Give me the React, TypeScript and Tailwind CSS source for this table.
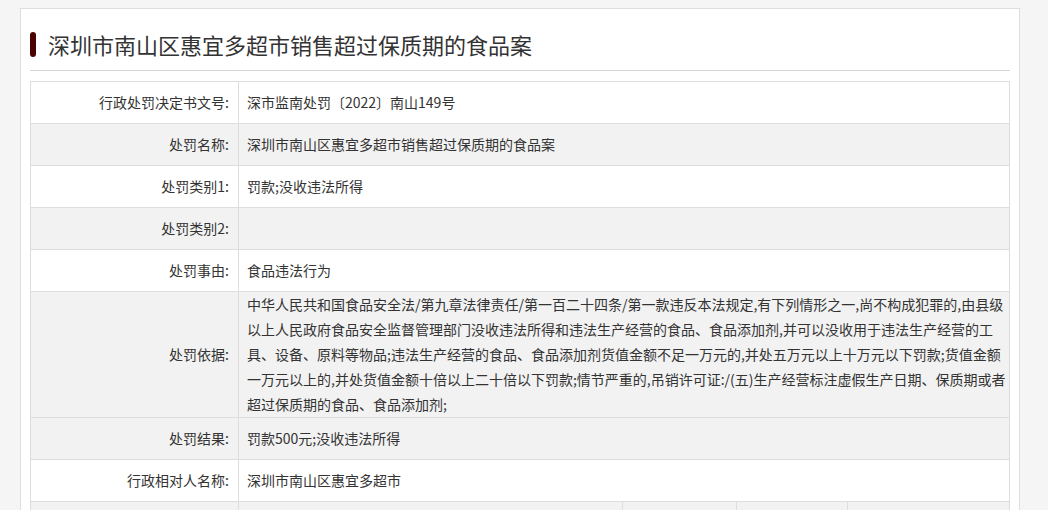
import type { ReactNode } from 'react'

interface Row {
  label: string
  value?: ReactNode
  gray?: boolean
}

const basisLines = [
  '中华人民共和国食品安全法/第九章法律责任/第一百二十四条/第一款违反本法规定,有下列情形之一,尚不构成犯罪的,由县级',
  '以上人民政府食品安全监督管理部门没收违法所得和违法生产经营的食品、食品添加剂,并可以没收用于违法生产经营的工',
  '具、设备、原料等物品;违法生产经营的食品、食品添加剂货值金额不足一万元的,并处五万元以上十万元以下罚款;货值金额',
  '一万元以上的,并处货值金额十倍以上二十倍以下罚款;情节严重的,吊销许可证:/(五)生产经营标注虚假生产日期、保质期或者',
  '超过保质期的食品、食品添加剂;',
]

const rows: Row[] = [
  { label: '行政处罚决定书文号:', value: '深市监南处罚〔2022〕南山149号' },
  { label: '处罚名称:', value: '深圳市南山区惠宜多超市销售超过保质期的食品案', gray: true },
  { label: '处罚类别1:', value: '罚款;没收违法所得' },
  { label: '处罚类别2:', value: '', gray: true },
  { label: '处罚事由:', value: '食品违法行为' },
  {
    label: '处罚依据:',
    value: (
      <div>
        {basisLines.map((line, i) => (
          <div key={i} className="whitespace-nowrap">
            {line}
          </div>
        ))}
      </div>
    ),
    gray: true,
  },
  { label: '处罚结果:', value: '罚款500元;没收违法所得', gray: true },
  { label: '行政相对人名称:', value: '深圳市南山区惠宜多超市' },
]

function TableRow({ row, first }: { row: Row; first?: boolean }) {
  return (
    <div
      className={`flex ${first ? '' : 'border-t border-[#dddddd]'} ${
        row.gray ? 'bg-[#f2f2f2]' : 'bg-white'
      }`}
    >
      <div className="flex min-h-[41px] w-[208px] shrink-0 items-center justify-end border-r border-[#dddddd] pr-[9px]">
        {row.label}
      </div>
      <div className="flex min-h-[41px] flex-1 items-center pl-[8px]">{row.value}</div>
    </div>
  )
}

export default function App() {
  return (
    <div className="min-h-screen bg-[#f5f5f5] pt-[8px] pl-[20px] font-['Noto_Sans_CJK_SC','Microsoft_YaHei',sans-serif] text-[14px] leading-[25px] text-[#333333]">
      <div className="w-[1000px] border border-[#dddddd] bg-white px-[9px] pb-[20px]">
        <div className="flex items-center gap-[12px] border-b border-[#d4d4d4] pt-[23px] pb-[13px]">
          <span className="h-[25px] w-[6px] rounded-full bg-[#4a0303]" />
          <h1 className="text-[22px] leading-[25px] text-[#333333]">
            深圳市南山区惠宜多超市销售超过保质期的食品案
          </h1>
        </div>

        <div className="mt-[10px] w-[980px] border border-[#dddddd]">
          {rows.map((row, i) => (
            <TableRow key={i} row={row} first={i === 0} />
          ))}
          <div className="flex border-t border-[#dddddd] bg-[#f2f2f2]">
            <div className="h-[41px] w-[208px] shrink-0 border-r border-[#dddddd]" />
            <div className="h-[41px] w-[384px] shrink-0 border-r border-[#dddddd]" />
            <div className="h-[41px] w-[114px] shrink-0 border-r border-[#dddddd]" />
            <div className="h-[41px] w-[111px] shrink-0 border-r border-[#dddddd]" />
            <div className="h-[41px] flex-1" />
          </div>
        </div>
      </div>
    </div>
  )
}
